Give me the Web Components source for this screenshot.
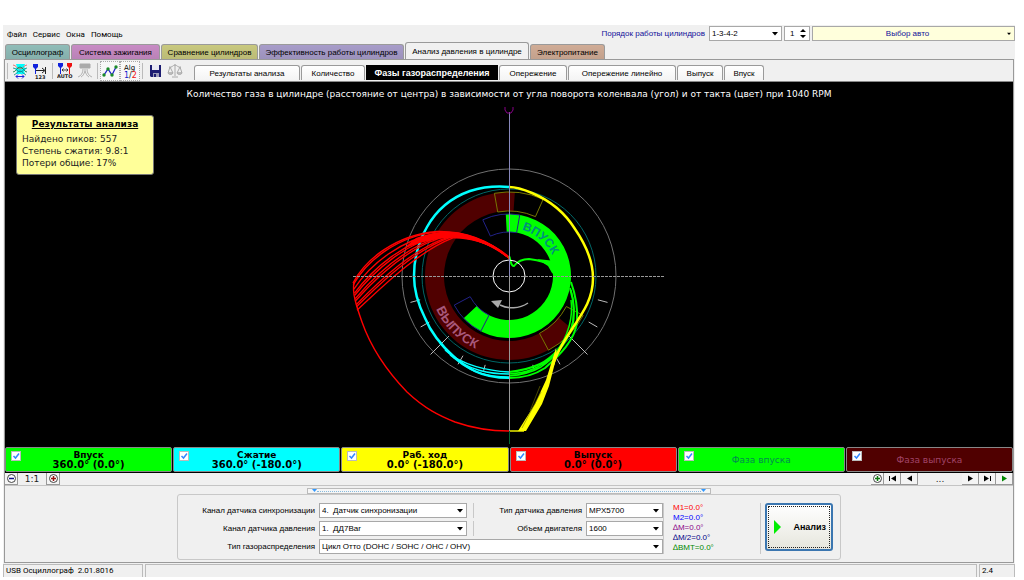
<!DOCTYPE html>
<html lang="ru">
<head>
<meta charset="utf-8">
<title>USB Осциллограф</title>
<style>
  body { margin: 25px 9px 3px 3px; background: #fff; }
</style>
</head>
<body>
<scope-app></scope-app>
<script>
const define = (name, html, setup) => {
  const tpl = document.createElement('template');
  tpl.innerHTML = html;
  customElements.define(name, class extends HTMLElement {
    constructor() {
      super();
      this.attachShadow({ mode: 'open' }).append(tpl.content.cloneNode(true));
    }
    connectedCallback() { if (setup) setup(this, this.shadowRoot); }
  });
};

/* Menu bar: plain text entries */
define('menu-bar', `
<style>
  :host { display: block; font: 8px/12px Roboto, sans-serif; }
  nav { display: flex; gap: 6px; padding: 4px 4px 0; }
  a { color: #000; text-decoration: none; }
</style>
<nav><a href="#file">Файл</a><a href="#service">Сервис</a><a href="#windows">Окна</a><a href="#help">Помощь</a></nav>`);

/* Combo box */
define('combo-box', `
<style>
  :host { display: flex; min-width: 0; }
  .box { position: relative; flex: 1; min-width: 0; }
  select { appearance: none; display: block; width: 100%; height: 15px; margin: 0; padding: 0 14px 0 2px;
    border: 1px solid #a8a8a8; border-radius: 0; background: var(--combo-bg, #fff); color: var(--combo-ink, #000);
    font: inherit; line-height: 13px; text-align-last: var(--combo-align, left); }
  svg { position: absolute; right: 4px; top: 6px; width: var(--arrow, 6px); height: 4px; pointer-events: none; }
</style>
<div class="box"><select><option></option></select><svg viewBox="0 0 6 4"><path d="M0 0h6L3 3.600z" fill="#000"/></svg></div>`,
(el, r) => {
  r.querySelector('option').textContent = el.getAttribute('value');
  r.querySelector('select').setAttribute('aria-label', el.getAttribute('label') || '');
});

/* Spin box */
define('spin-box', `
<style>
  :host { display: grid; width: 26px; }
  input, svg { grid-area: 1 / 1; }
  input { appearance: textfield; box-sizing: border-box; width: 100%; height: 15px; margin: 0; padding: 0 0 0 5px;
    border: 1px solid #a8a8a8; background: #fff; font: inherit; }
  input::-webkit-inner-spin-button { display: none; }
  svg { justify-self: end; align-self: center; width: 12px; height: 11px; pointer-events: none; }
</style>
<input type="number" value="1" aria-label="Цилиндр"><svg viewBox="0 0 12 11"><path d="M2 4h6L5 1zM2 7h6L5 10z"/></svg>`);

/* Main tabs and view tabs */
define('page-tab', `
<style>
  :host { display: block; width: var(--w); }
  button { box-sizing: border-box; width: 100%; height: 15px; padding: 0; border: 1px solid #9a9a9a; border-bottom: 0;
    border-radius: 3px 3px 0 0; background: var(--c, linear-gradient(#fff, #f4f4f4)); color: #000; font: inherit;
    line-height: 13px; white-space: nowrap; }
  :host([main]) button { background: linear-gradient(#0000, #0001), var(--c); }
  :host([main][on]) button { height: 17px; background: #f1f1f1; }
  :host([view][on]) button { background: #000; color: #fff; border-color: #000; border-radius: 0;
    font: bold 9px/13px "Liberation Sans", sans-serif; }
</style>
<button type="button" role="tab"><slot></slot></button>`,
(el, r) => r.querySelector('button').setAttribute('aria-selected', el.hasAttribute('on')));

/* Toolbar with icon buttons */
define('tool-bar', `
<style>
  :host { display: flex; align-items: center; height: 21px; }
  button { display: block; box-sizing: border-box; width: 20px; height: 20px; padding: 0; border: 1px solid transparent; background: none; }
  button.down { border: 1px dotted #aaa; background: #f8f8f8; }
  svg { display: block; width: 16px; height: 16px; margin: auto; }
  i { width: 1px; height: 16px; background: #bbb; margin: 0 2px; }
  text { font-family: "DejaVu Sans", sans-serif; font-weight: bold; }
</style>
<i></i>
<button aria-label="Автоподстройка"><svg viewBox="0 0 16 16"><path d="M4 1h9l-1 3 2 2-2 2 1 3H4l1-3-2-2 2-2z" fill="#0ff"/><path d="M1 2c3 0 4 4 7 4s4-4 7-4" fill="none" stroke="#d66" stroke-width=".9"/><path d="M1 9c3 0 4-5 7-5s4 5 7 5" fill="none" stroke="#177f4a" stroke-width=".9"/><path d="M1 5c4 0 4 4 7 4s4-4 7-4M2 12c3-1 3-4 6-4s3 3 6 4" fill="none" stroke="#178a8a" stroke-width=".9"/><path d="M4 13.500h8M6 11.500l-2 2 2 2M10 11.500l2 2-2 2" fill="none" stroke="#22d"/></svg></button>
<button aria-label="Маркеры"><svg viewBox="0 0 16 16"><path d="M1 1h5v3L4 6H3L1 4z" fill="#12d"/><path d="M3.500 5v6" stroke="#12d"/><path d="M4 7.500h8M10 5l3 2.500-3 2.500M13.500 4v7" fill="none" stroke="#222"/><text x="3" y="15.500" font-size="5" fill="#222">123</text></svg></button>
<i></i>
<button aria-label="Авто"><svg viewBox="0 0 16 16"><path d="M1 0h5v3L4 5H3L1 3z" fill="#12d"/><path d="M3.500 5v6" stroke="#12d"/><path d="M10 0h5v3l-2 2h-1l-2-2z" fill="#e11"/><path d="M12.500 5v6" stroke="#e11"/><path d="M5 7h6M6.500 5.500L5 7l1.500 1.500M9.500 5.500L11 7l-1.500 1.500" fill="none" stroke="#222" stroke-width=".8"/><text x="0" y="15" font-size="5" fill="#222">AUTO</text></svg></button>
<button aria-label="Датчик"><svg viewBox="0 0 16 16" fill="none" stroke="#aaa"><path d="M3 1h10v4H3z" fill="#aaa"/><path d="M6 6c0 4-2 7-5 8M10 6c0 4 2 7 5 8M8 6v2M8 8c-1 3-2 5-4 6M8 8c1 3 2 5 4 6" stroke-width=".9"/></svg></button>
<i></i>
<button class="down" aria-label="График"><svg viewBox="0 0 16 16"><path d="M2 12l4-6 4 6 4-8" fill="none" stroke="#22c" stroke-width="1.300"/><g fill="#1b8a2a"><circle cx="2" cy="12" r="1.700"/><circle cx="6" cy="6" r="1.700"/><circle cx="10" cy="12" r="1.700"/><circle cx="14" cy="4" r="1.700"/></g></svg></button>
<button class="down" aria-label="Алгоритм"><svg viewBox="0 0 16 16"><text x="2" y="6.500" font-size="7" style="font-weight:normal">Alg</text><text x="2" y="15" font-size="8" style="font-weight:normal" fill="#12c">1<tspan fill="#222">/</tspan><tspan fill="#e11">2</tspan></text></svg></button>
<i></i>
<button aria-label="Сохранить"><svg viewBox="0 0 16 16"><path d="M3 2h11v12H4l-1-1z" fill="#1b1b70"/><path d="M5 2h7v5H5z" fill="#e8e8f4"/><path d="M6 10h6v4H6z" fill="#9a9ab8"/><path d="M7 11h2v3H7z" fill="#1b1b70"/></svg></button>
<button aria-label="Весы"><svg viewBox="0 0 16 16" fill="none" stroke="#aaa"><path d="M8 1v12M5 14h6M2 4c3 1 4-2 6-2s3 3 6 2M3 4l-2 6h5L3 4M13 4l-3 6h5l-2-6"/><path d="M1 10c1 2 4 2 5 0zM10 10c1 2 4 2 5 0z" fill="#ccc"/></svg></button>
<slot></slot>`);

/* Polar diagram of the gas amount over the crankshaft angle */
define('polar-plot', `
<style>
  :host { display: grid; background: #000; color: #fff; font: 9px/12px "DejaVu Sans", sans-serif; }
  svg, h1, aside { grid-area: 1 / 1; }
  svg { display: block; width: 100%; height: auto; }
  h1 { margin: 6px 0 0; font: inherit; text-align: center; height: 12px; }
  aside { align-self: start; justify-self: start; box-sizing: border-box; width: 138px; height: 60px; margin: 33px 0 0 11px;
    padding: 2px 5px; border: 1px solid #777; border-radius: 3px; background: #ff9; color: #222; }
  h2 { margin: 0 0 3px; font: bold 9px/12px "DejaVu Sans", sans-serif; text-align: center; text-decoration: underline; color: #000; }
  p { margin: 0; }
  .l { fill: none; stroke-width: 1; }
  text { font: bold 12px "Liberation Sans", sans-serif; }
</style>
<svg viewBox="5 82 1008 365" aria-label="Фазы газораспределения">
  <defs>
    <path id="in" d="M509 276m0-48a48 48 0 0 1 48 48"/>
    <path id="out" d="M429 276a80 80 0 0 0 80 80"/>
  </defs>
  <circle class="l" cx="509" cy="276" r="107" stroke="#707070"/>
  <circle class="l" cx="509" cy="276" r="87" stroke="#066"/>
  <path id="ex"  fill="#500000"/>
  <path id="int" fill="#0f0"/>
  <g id="boxes" class="l"></g>
  <g class="l" id="ticks" stroke="#bbb"></g>
  <text fill="#008c80"><textPath href="#in" startOffset="13">ВПУСК</textPath></text>
  <text fill="#a8587c" style="font-size:13px"><textPath href="#out" startOffset="34">ВЫПУСК</textPath></text>
  <path d="M500 305c8 4 19 4 28-2" fill="none" stroke="#aaa" stroke-width="1.500"/>
  <path d="M491 301l11-1-4 8z" fill="#aaa"/>
  <g fill="none" stroke="#0ff">
    <path stroke-width="2.500" d="M509 187C497 186 483 187 470 191C450 198 436 211 427 227C420 239 414 256 414 276C414 290 418 304 425 318C431 333 444 348 455 358"/>
    <path stroke-width="2" d="M440 343C466 371 483 378 509 378"/>
    <path stroke-width="1.500" d="M445 350C462 366 490 371 509 372M450 355C470 371 490 374 509 374M448 352C468 374 490 377 509 377"/>
  </g>
  <g class="l" stroke="#f00" id="red"></g>
  <path fill="none" stroke="#f00" stroke-width="1.400" d="M354 283C352 292 356 305 362 322C369 342 381 365 407 392C425 409 440 416 455 422C475 429 492 431 509 431"/>
  <path fill="#f00" d="M509 256C497 246 485 240 463 234C450 231 435 231 416 238L404 248C428 240 448 236 464 238C480 240 496 249 509 259z"/>
  <g fill="none" stroke="#0f0">
    <path stroke-width="2" d="M509 256C511 259 510 266 514 266C517 262 522 259 529 259C539 260 547 262 556 268"/>
    <path fill="#0f0" stroke="none" d="M537 259L556 261V276L552 273L548 266z"/>
    <path stroke-width="2" d="M571 282C576 296 578 308 577 322C575 340 560 355 545 368C533 376 521 378 509 378"/>
    <path stroke-width="2" d="M570 288C574 301 575 316 572 329C565 343 553 358 540 364C529 369 520 371 509 372"/>
    <path stroke-width="1.500" d="M571 300C573 315 570 336 553 356C539 369 525 373 509 374M571 290C579 318 571 346 541 367C531 373 521 375 509 376"/>
  </g>
  <g fill="none" stroke="#ff0">
    <path stroke-width="2.500" d="M509 187C517 187 525 190 532 193C551 201 565 213 575 229C588 248 593 263 593 278C593 298 584 311 572 329C564 341 556 354 553 365"/>
    <path fill="#ff0" stroke="none" d="M556 348L557 355L549 386L542 404L526 431H518L535 404L546 380z"/>
    <path stroke-width="1.400" d="M509 431h15"/>
    <path stroke="#770" stroke-width=".6" d="M541 392L522 428M540 386L530 411"/>
  </g>
  <circle class="l" cx="509" cy="276" r="16" stroke="#fff" stroke-width="1.200"/>
  <path class="l" d="M353 276.500H664" stroke="#999" stroke-dasharray="3 1"/>
  <path class="l" d="M509.500 112V276" stroke="#88b"/>
  <path class="l" d="M509.500 276V431" stroke="#999"/>
  <path class="l" d="M509.500 431V444" stroke="#063"/>
  <path class="l" d="M505 107v3l2 3h4l2-3v-3" stroke="#808"/>
</svg>
<h1>Количество газа в цилиндре (расстояние от центра) в зависимости от угла поворота коленвала (угол) и от такта (цвет) при 1040 RPM</h1>
<aside><h2>Результаты анализа</h2><p>Найдено пиков: 557</p><p>Степень сжатия: 9.8:1</p><p>Потери общие: 17%</p></aside>`,
(el, r) => {
  /* Angles are clockwise from the top dead centre */
  const pt = (rad, deg) => {
    const a = deg * Math.PI / 180;
    return (509 + rad * Math.sin(a)).toFixed(2) + ' ' + (276 - rad * Math.cos(a)).toFixed(2);
  };
  const band = (r0, r1, a0, a1) => {
    const big = a1 - a0 > 180 ? 1 : 0;
    return `M${pt(r1, a0)}A${r1} ${r1} 0 ${big} 1 ${pt(r1, a1)}L${pt(r0, a1)}A${r0} ${r0} 0 ${big} 0 ${pt(r0, a0)}z`;
  };
  r.getElementById('ex').setAttribute('d', band(65, 84, 130, 364));
  r.getElementById('int').setAttribute('d', band(44, 62, -3, 227));
  r.getElementById('boxes').innerHTML =
    `<path stroke="#770" d="${band(65, 84, -10, 24)}"/><path stroke="#770" d="${band(65, 84, 118, 152)}"/>` +
    `<path stroke="#228" d="${band(44, 62, -25, 10)}"/><path stroke="#228" d="${band(44, 62, 207, 242)}"/>`;
  r.getElementById('ticks').innerHTML = [105, 120, 135, 150, 165, 195, 210, 225, 240, 255].map(a => {
    const long = a % 90 === 45;
    const faint = a === 165 || a === 195;
    return `<path d="M${pt(long ? 85 : 92, a)}L${pt(long ? 111 : faint ? 98 : 102, a)}"/>`;
  }).join('');
  /* Successive cycles spread a little at the pressure peak */
  let red = '';
  for (const i of [0, .5, 1.8, 3, 3.6, 4.6, 5.2, 6.4, 7, 8]) {
    const x = 353 + i * .5, y = 283 + i * 3.4;
    red += `<path stroke-width="1.400" d="M${x} ${y}C${365 + i * 2.5} ${260 + i * 3} ${395 + i * 3} ${235 + i * 2} ${437 + i * 2} ${231.5 + i * .8}C465 ${231 + i * .8} 490 241 509 258"/>`;
  }
  r.getElementById('red').innerHTML = red;
});

/* One stroke or phase with its visibility tick box */
define('phase-chip', `
<style>
  :host { display: block; min-width: 0; }
  label { display: grid; grid-template-columns: 1fr; box-sizing: border-box; height: 25px; border: 1px solid #888;
    background: var(--c); color: var(--t, #000); font: bold 9px/10px "DejaVu Sans", sans-serif; text-align: center; border-radius: 2px; }
  input, svg, .t { grid-area: 1 / 1; }
  input { appearance: none; width: 10px; height: 10px; margin: 3px 0 0 5px; border: 1px solid #bbb; background: #fff; box-sizing: border-box; }
  svg { width: 10px; height: 10px; margin: 3px 0 0 5px; }
  .t { display: grid; align-content: center; }
  ::slotted(b) { font-size: 10px; }
  :host([soft]) .t { font-weight: normal; }
</style>
<label><input type="checkbox" checked><svg viewBox="0 0 10 10"><path d="M2.500 5l2 2L8 2.500" fill="none" stroke="#38f" stroke-width="1.500"/></svg><span class="t"><slot></slot></span></label>`);

/* Zoom and playback row */
define('nav-row', `
<style>
  :host { display: flex; height: 12px; border-bottom: 1px solid #c4c4c4; font: 9px/13px "DejaVu Sans", sans-serif; color: #222; }
  button { box-sizing: border-box; height: 12px; width: 17px; padding: 0; border: 0; border-right: 1px solid #999; border-bottom: 1px solid #999; background: #f4f4f4; }
  button.s { width: 13px; }
  svg { display: block; height: 11px; width: 11px; margin: auto; }
  .z { width: 29px; text-align: center; border-right: 1px solid #999; box-sizing: border-box; }
  .d { width: 44px; text-align: center; }
  .sp { flex: 1; }
</style>
<button class="s" aria-label="Уменьшить"><svg viewBox="0 0 11 11"><circle cx="5.500" cy="5.500" r="4" fill="#fff" stroke="#444"/><path d="M3 5.500h5" stroke="#118" stroke-width="1.500"/></svg></button>
<span class="z">1:1</span>
<button class="s" aria-label="Увеличить"><svg viewBox="0 0 11 11"><circle cx="5.500" cy="5.500" r="4" fill="#fff" stroke="#444"/><path d="M3 5.500h5M5.500 3v5" stroke="#911" stroke-width="1.500"/></svg></button>
<span class="sp"></span>
<button class="s" aria-label="Добавить"><svg viewBox="0 0 11 11"><circle cx="5.500" cy="5.500" r="4" fill="#fff" stroke="#444"/><path d="M3 5.500h5M5.500 3v5" stroke="#171" stroke-width="1.500"/></svg></button>
<button aria-label="В начало"><svg viewBox="0 0 11 11"><path d="M2 3h1v5H2zM9 2.500v6l-5-3z"/></svg></button>
<button aria-label="Назад"><svg viewBox="0 0 11 11"><path d="M8 2.500v6l-5-3z"/></svg></button>
<span class="d">...</span>
<button aria-label="Вперёд"><svg viewBox="0 0 11 11"><path d="M3 2.500v6l5-3z"/></svg></button>
<button aria-label="В конец"><svg viewBox="0 0 11 11"><path d="M2 2.500v6l5-3zM8 3h1v5H8z"/></svg></button>
<button aria-label="Пуск"><svg viewBox="0 0 11 11"><path d="M3 2.500v6l5-3z" fill="#080"/></svg></button>`);

/* Analysis settings */
define('analysis-form', `
<style>
  :host { display: block; font: 8px/15px "Liberation Sans", sans-serif; color: #000; padding: 2px 0 2px; }
  .grip { display: flex; align-items: center; justify-content: space-between; box-sizing: border-box; width: 40%; height: 6px; margin: 0 auto; padding: 0 4px; border: 1px solid #bbb; background: #f6f6f6; }
  .grip svg { width: 5px; height: 4px; }
  .grip i { flex: 1; border-top: 1px dotted #8bd; }
  form { display: flex; justify-content: center; align-items: stretch; width: 664px; max-width: 100%; box-sizing: border-box; height: 66px;
    margin: 0 auto; padding: 8px 7px 5px 6px; border: 1px solid #c8c8c8; border-radius: 3px; }
  .fields { flex: 1; display: grid; grid-template-columns: 131px 148px 111px 77px; column-gap: 4px; row-gap: 3px; align-content: start; }
  label { text-align: right; white-space: nowrap; }
  .pair { border-left: 1px solid #c8c8c8; margin-left: 2px; }
  .wide { grid-column: 2 / 5; }
  .vals { width: 88px; margin: 0 4px 0 0; padding: 0 0 0 9px; border: solid #c8c8c8; border-width: 0 1px; line-height: 10px; }
  .vals div { white-space: nowrap; }
  form > button { display: flex; align-items: center; gap: 12px; width: 68px; height: 48px; padding: 0 0 0 6px; border: 2px solid #3b76b0;
    border-radius: 3px; background: linear-gradient(#fff, #e6e6dd); outline: 1px dotted #222; outline-offset: -4px; font: bold 9px/12px "Liberation Sans", sans-serif; color: #000; }
  form > button svg { width: 8px; height: 14px; }
</style>
<div class="grip"><svg viewBox="0 0 5 4"><path d="M0 0h5L2.500 3z" fill="#39f"/></svg><i></i><svg viewBox="0 0 5 4"><path d="M0 0h5L2.500 3z" fill="#39f"/></svg></div>
<form>
  <div class="fields">
    <label>Канал датчика синхронизации</label><combo-box label="Канал датчика синхронизации" value="4.&nbsp;&nbsp;Датчик синхронизации"></combo-box>
    <label class="pair">Тип датчика давления</label><combo-box label="Тип датчика давления" value="MPX5700"></combo-box>
    <label>Канал датчика давления</label><combo-box label="Канал датчика давления" value="1.&nbsp;&nbsp;ДД7Bar"></combo-box>
    <label class="pair">Объем двигателя</label><combo-box label="Объем двигателя" value="1600"></combo-box>
    <label>Тип газораспределения</label><combo-box class="wide" label="Тип газораспределения" value="Цикл Отто (DOHC / SOHC / OHC / OHV)"></combo-box>
  </div>
  <div class="vals">
    <div style="color:#f00">M1=0.0°</div><div style="color:#00f">M2=0.0°</div><div style="color:#808">∆M=0.0°</div><div style="color:#008">∆M/2=0.0°</div><div style="color:#080">∆BMT=0.0°</div>
  </div>
  <button type="button"><svg viewBox="0 0 8 14"><path d="M1 0l7 7-7 7z" fill="#0e0"/></svg>Анализ</button>
</form>`);

define('status-line', `
<style>
  :host { display: grid; grid-template-columns: 140px 1fr 36px; gap: 2px; height: 14px; font: 8px/14px Roboto, sans-serif; color: #000; padding-top: 1px; box-sizing: border-box; }
  span { border: 1px solid #bbb; border-width: 1px 1px 0; padding-left: 2px; line-height: 12px; white-space: pre; }
</style>
<span>USB Осциллограф  2.01.8016</span><span></span><span>2.4</span>`);

define('scope-app', `
<style>
  :host { display: block; background: #f0f0f0; font: 8px/12px "Liberation Sans", sans-serif; }
  header { display: flex; height: 18px; }
  menu-bar { flex: 1; }
  .top { display: flex; align-items: flex-start; padding-top: 1px; gap: 2px; }
  .top span { color: #11119a; line-height: 15px; margin-right: 2px; }
  .order { width: 73px; }
  .car { width: 203px; --combo-bg: #ffffdc; --combo-ink: #11119a; --combo-align: center; --arrow: 4px; }
  .tabs { display: flex; align-items: flex-end; gap: 1px; height: 16px; padding-left: 2px; }
  main { margin: 0 1px; border: 1px solid #999; }
  .views { display: flex; align-items: flex-end; align-self: flex-end; gap: 1px; margin-left: 9px; padding-bottom: 1px; }
  .chips { display: grid; grid-template-columns: repeat(6, 1fr); gap: 1px; background: #000; padding-bottom: 1px; }
  tool-bar { border-bottom: 1px solid #888; }
</style>
<header>
  <menu-bar></menu-bar>
  <div class="top"><span>Порядок работы цилиндров</span>
    <combo-box class="order" label="Порядок работы цилиндров" value="1-3-4-2"></combo-box>
    <spin-box></spin-box>
    <combo-box class="car" label="Авто" value="Выбор авто"></combo-box></div>
</header>
<div class="tabs" role="tablist">
  <page-tab main style="--w:65px;--c:#8fbcb8">Осциллограф</page-tab>
  <page-tab main style="--w:89px;--c:#c78bc4">Система зажигания</page-tab>
  <page-tab main style="--w:97px;--c:#c8c87e">Сравнение цилиндров</page-tab>
  <page-tab main style="--w:145px;--c:#a79cc9">Эффективность работы цилиндров</page-tab>
  <page-tab main on style="--w:124px">Анализ давления в цилиндре</page-tab>
  <page-tab main style="--w:75px;--c:#d0ac96">Электропитание</page-tab>
</div>
<main>
  <tool-bar><div class="views" role="tablist">
    <page-tab view style="--w:106px">Результаты анализа</page-tab>
    <page-tab view style="--w:64px">Количество</page-tab>
    <page-tab view on style="--w:132px">Фазы газораспределения</page-tab>
    <page-tab view style="--w:68px">Опережение</page-tab>
    <page-tab view style="--w:108px">Опережение линейно</page-tab>
    <page-tab view style="--w:46px">Выпуск</page-tab>
    <page-tab view style="--w:40px">Впуск</page-tab>
  </div></tool-bar>
  <polar-plot></polar-plot>
  <div class="chips">
    <phase-chip style="--c:#0f0">Впуск<b>360.0° (0.0°)</b></phase-chip>
    <phase-chip style="--c:#0ff">Сжатие<b>360.0° (-180.0°)</b></phase-chip>
    <phase-chip style="--c:#ff0">Раб. ход<b>0.0° (-180.0°)</b></phase-chip>
    <phase-chip style="--c:#f00">Выпуск<b>0.0° (0.0°)</b></phase-chip>
    <phase-chip soft style="--c:#0f0;--t:#008c50">Фаза впуска</phase-chip>
    <phase-chip soft style="--c:#500000;--t:#a04468">Фаза выпуска</phase-chip>
  </div>
  <nav-row></nav-row>
  <analysis-form></analysis-form>
</main>
<status-line></status-line>`);
</script>
</body>
</html>
